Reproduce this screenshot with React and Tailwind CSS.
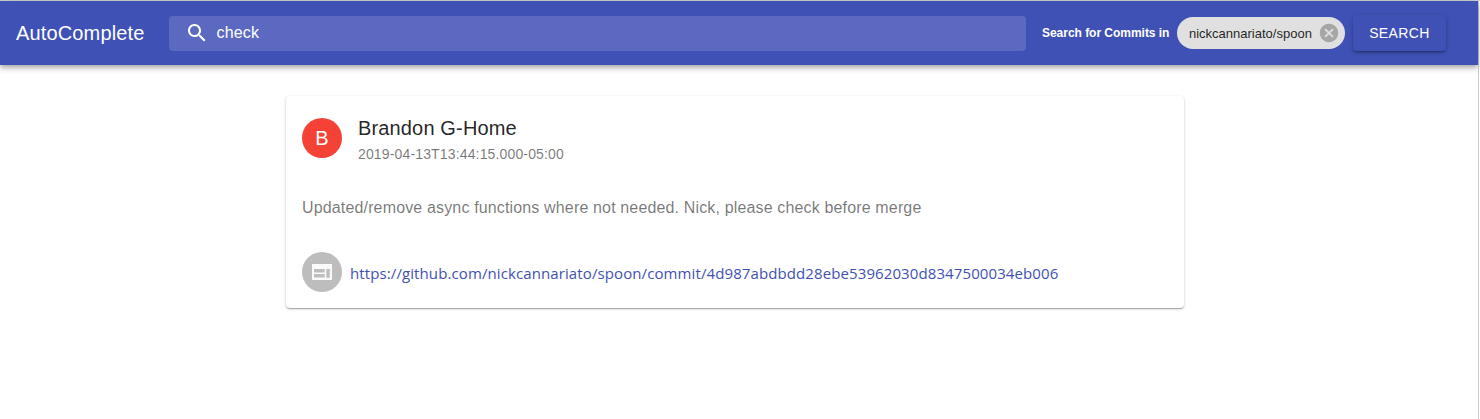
function Icon({ d, className }) {
  return (
    <svg viewBox="0 0 24 24" fill="currentColor" className={className} aria-hidden="true">
      <path d={d} />
    </svg>
  );
}

const SEARCH =
  'M15.5 14h-.79l-.28-.27C15.41 12.59 16 11.11 16 9.5 16 5.91 13.09 3 9.5 3S3 5.91 3 9.5 5.91 16 9.5 16c1.61 0 3.09-.59 4.23-1.57l.27.28v.79l5 4.99L20.49 19l-4.99-5zm-6 0C7.01 14 5 11.99 5 9.5S7.01 5 9.5 5 14 7.01 14 9.5 11.99 14 9.5 14z';
const CANCEL =
  'M12 2C6.47 2 2 6.47 2 12s4.47 10 10 10 10-4.47 10-10S17.53 2 12 2zm5 13.59L15.59 17 12 13.41 8.41 17 7 15.59 10.59 12 7 8.41 8.41 7 12 10.59 15.59 7 17 8.41 13.41 12 17 15.59z';
const WEB = 'M2 4H22V20H2zM4 9V12.4H14.7V9zM4 14V17.6H14.7V14zM16.3 9V17.8H19.8V9z';

function Header() {
  return (
    <header className="flex h-16 shrink-0 items-center bg-[#3f51b5] pr-8 pl-4 text-white shadow-[0px_2px_4px_-1px_rgba(0,0,0,0.2),0px_4px_5px_0px_rgba(0,0,0,0.14),0px_1px_10px_0px_rgba(0,0,0,0.12)]">
      <h1 className="w-[153px] shrink-0 text-[20px] leading-8 font-normal tracking-[0.15px]">AutoComplete</h1>
      <label className="flex h-[35px] w-[857px] shrink-0 items-center rounded bg-white/15 pl-4">
        <Icon d={SEARCH} className="size-6" />
        <span className="pl-[7.5px] text-[16px] leading-5 tracking-[0.15px]">check</span>
      </label>
      <span className="ml-4 w-[135px] shrink-0 text-[12px] leading-5 font-bold tracking-[-0.03px] whitespace-nowrap">
        Search for Commits in
      </span>
      <div className="flex h-8 w-[168px] shrink-0 items-center rounded-full bg-[#e0e0e0] pr-[5px] pl-3 text-[13px] whitespace-nowrap text-black/87">
        <span className="flex-1 pt-px">nickcannariato/spoon</span>
        <Icon d={CANCEL} className="size-[22px] text-[#a6a6a6]" />
      </div>
      <button className="ml-2 h-9 w-[93px] shrink-0 rounded bg-[#3f51b5] text-[14px] tracking-[0.4px] shadow-[0px_1px_5px_0px_rgba(0,0,0,0.2),0px_2px_2px_0px_rgba(0,0,0,0.14),0px_3px_1px_-2px_rgba(0,0,0,0.12)]">
        SEARCH
      </button>
    </header>
  );
}

function CommitCard() {
  return (
    <article className="mt-[31px] ml-[286px] flex h-[212px] w-[898px] flex-col rounded bg-white px-4 shadow-[0px_1px_3px_0px_rgba(0,0,0,0.2),0px_1px_1px_0px_rgba(0,0,0,0.14),0px_2px_1px_-1px_rgba(0,0,0,0.12)]">
      <div className="flex h-[84px] items-center">
        <div className="flex size-10 items-center justify-center rounded-full bg-[#f44336] text-[20px] text-white">B</div>
        <div className="ml-4">
          <h2 className="text-[20px] leading-8 font-normal tracking-[0.15px] text-black/87">Brandon G-Home</h2>
          <p className="text-[14px] leading-5 tracking-[0.15px] text-black/54">2019-04-13T13:44:15.000-05:00</p>
        </div>
      </div>
      <p className="mt-4 text-[16px] leading-6 tracking-[0.15px] text-black/54">
        Updated/remove async functions where not needed. Nick, please check before merge
      </p>
      <div className="mt-8 flex h-10 items-center">
        <div className="flex size-10 items-center justify-center rounded-full bg-[#bdbdbd] text-[#fafafa]">
          <Icon d={WEB} className="size-6" />
        </div>
        <a className="ml-2 pt-0.5 font-['Open_Sans','Noto_Sans',sans-serif] text-[15px] leading-6 tracking-[0.103px] text-[#3f51b5]">
          https://github.com/nickcannariato/spoon/commit/4d987abdbdd28ebe53962030d8347500034eb006
        </a>
      </div>
    </article>
  );
}

export default function App() {
  return (
    <div className="h-[419px] border-t border-[#cfd0d4] bg-white font-['Liberation_Sans',Arial,sans-serif]">
      <main className="mr-px flex h-full flex-col border-r border-[#cccccc]">
        <Header />
        <CommitCard />
      </main>
    </div>
  );
}
